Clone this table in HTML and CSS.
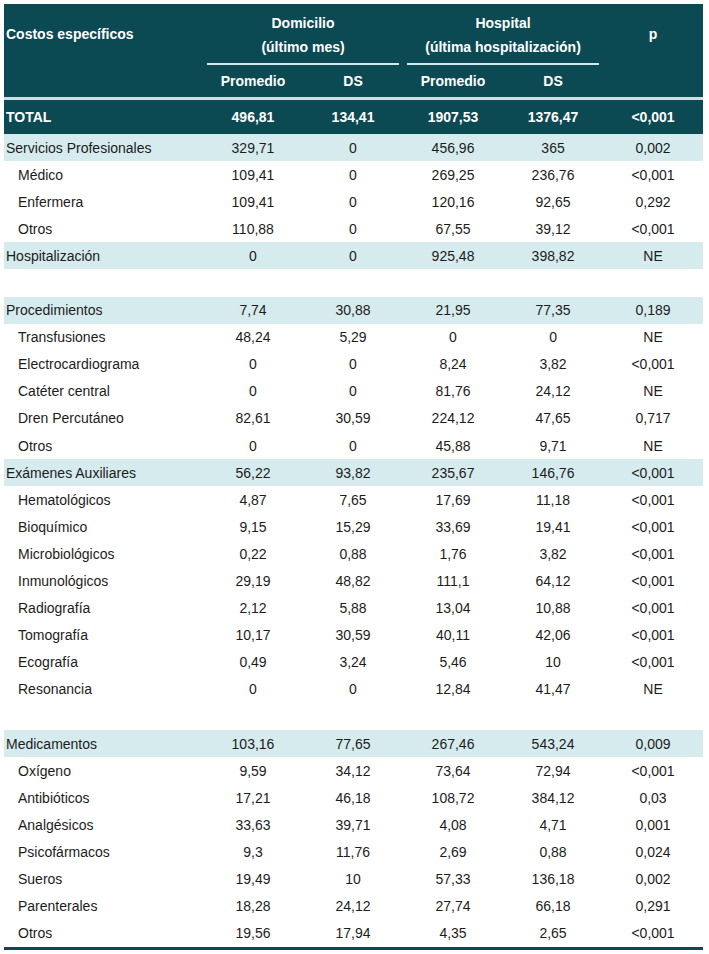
FILE: index.html
```html
<!DOCTYPE html>
<html lang="es">
<head>
<meta charset="utf-8">
<title>Costos específicos</title>
<link rel="stylesheet" href="styles.css">
</head>
<body>
<table class="costs">
  <colgroup>
    <col class="c-label">
    <col class="c-num"><col class="c-num"><col class="c-num"><col class="c-num"><col class="c-num">
  </colgroup>
  <thead>
    <tr class="h1">
      <th class="lbl">Costos específicos</th>
      <th colspan="2" class="grp"><div class="grp-in">Domicilio<br>(último mes)</div></th>
      <th colspan="2" class="grp"><div class="grp-in">Hospital<br>(última hospitalización)</div></th>
      <th>p</th>
    </tr>
    <tr class="h2">
      <th></th>
      <th>Promedio</th><th>DS</th><th>Promedio</th><th>DS</th>
      <th></th>
    </tr>
  </thead>
  <tbody>
    <tr class="total"><td class="lbl">TOTAL</td><td>496,81</td><td>134,41</td><td>1907,53</td><td>1376,47</td><td>&lt;0,001</td></tr>
    <tr class="cat"><td class="lbl">Servicios Profesionales</td><td>329,71</td><td>0</td><td>456,96</td><td>365</td><td>0,002</td></tr>
    <tr><td class="sub">Médico</td><td>109,41</td><td>0</td><td>269,25</td><td>236,76</td><td>&lt;0,001</td></tr>
    <tr><td class="sub">Enfermera</td><td>109,41</td><td>0</td><td>120,16</td><td>92,65</td><td>0,292</td></tr>
    <tr><td class="sub">Otros</td><td>110,88</td><td>0</td><td>67,55</td><td>39,12</td><td>&lt;0,001</td></tr>
    <tr class="cat"><td class="lbl">Hospitalización</td><td>0</td><td>0</td><td>925,48</td><td>398,82</td><td>NE</td></tr>
    <tr class="blank"><td colspan="6"></td></tr>
    <tr class="cat"><td class="lbl">Procedimientos</td><td>7,74</td><td>30,88</td><td>21,95</td><td>77,35</td><td>0,189</td></tr>
    <tr><td class="sub">Transfusiones</td><td>48,24</td><td>5,29</td><td>0</td><td>0</td><td>NE</td></tr>
    <tr><td class="sub">Electrocardiograma</td><td>0</td><td>0</td><td>8,24</td><td>3,82</td><td>&lt;0,001</td></tr>
    <tr><td class="sub">Catéter central</td><td>0</td><td>0</td><td>81,76</td><td>24,12</td><td>NE</td></tr>
    <tr><td class="sub">Dren Percutáneo</td><td>82,61</td><td>30,59</td><td>224,12</td><td>47,65</td><td>0,717</td></tr>
    <tr><td class="sub">Otros</td><td>0</td><td>0</td><td>45,88</td><td>9,71</td><td>NE</td></tr>
    <tr class="cat"><td class="lbl">Exámenes Auxiliares</td><td>56,22</td><td>93,82</td><td>235,67</td><td>146,76</td><td>&lt;0,001</td></tr>
    <tr><td class="sub">Hematológicos</td><td>4,87</td><td>7,65</td><td>17,69</td><td>11,18</td><td>&lt;0,001</td></tr>
    <tr><td class="sub">Bioquímico</td><td>9,15</td><td>15,29</td><td>33,69</td><td>19,41</td><td>&lt;0,001</td></tr>
    <tr><td class="sub">Microbiológicos</td><td>0,22</td><td>0,88</td><td>1,76</td><td>3,82</td><td>&lt;0,001</td></tr>
    <tr><td class="sub">Inmunológicos</td><td>29,19</td><td>48,82</td><td>111,1</td><td>64,12</td><td>&lt;0,001</td></tr>
    <tr><td class="sub">Radiografía</td><td>2,12</td><td>5,88</td><td>13,04</td><td>10,88</td><td>&lt;0,001</td></tr>
    <tr><td class="sub">Tomografía</td><td>10,17</td><td>30,59</td><td>40,11</td><td>42,06</td><td>&lt;0,001</td></tr>
    <tr><td class="sub">Ecografía</td><td>0,49</td><td>3,24</td><td>5,46</td><td>10</td><td>&lt;0,001</td></tr>
    <tr><td class="sub">Resonancia</td><td>0</td><td>0</td><td>12,84</td><td>41,47</td><td>NE</td></tr>
    <tr class="blank"><td colspan="6"></td></tr>
    <tr class="cat"><td class="lbl">Medicamentos</td><td>103,16</td><td>77,65</td><td>267,46</td><td>543,24</td><td>0,009</td></tr>
    <tr><td class="sub">Oxígeno</td><td>9,59</td><td>34,12</td><td>73,64</td><td>72,94</td><td>&lt;0,001</td></tr>
    <tr><td class="sub">Antibióticos</td><td>17,21</td><td>46,18</td><td>108,72</td><td>384,12</td><td>0,03</td></tr>
    <tr><td class="sub">Analgésicos</td><td>33,63</td><td>39,71</td><td>4,08</td><td>4,71</td><td>0,001</td></tr>
    <tr><td class="sub">Psicofármacos</td><td>9,3</td><td>11,76</td><td>2,69</td><td>0,88</td><td>0,024</td></tr>
    <tr><td class="sub">Sueros</td><td>19,49</td><td>10</td><td>57,33</td><td>136,18</td><td>0,002</td></tr>
    <tr><td class="sub">Parenterales</td><td>18,28</td><td>24,12</td><td>27,74</td><td>66,18</td><td>0,291</td></tr>
    <tr class="last"><td class="sub">Otros</td><td>19,56</td><td>17,94</td><td>4,35</td><td>2,65</td><td>&lt;0,001</td></tr>
  </tbody>
</table>
</body>
</html>
```
FILE: styles.css
```css
html, body {
  margin: 0;
  padding: 0;
  background: #ffffff;
}

body {
  font-family: "Liberation Sans", Arial, sans-serif;
  font-size: 14px;
  color: #1c1c1c;
}

.costs {
  margin: 4px 0 0 4px;
  width: 699px;
  border-collapse: collapse;
  table-layout: fixed;
}

.c-label { width: 199px; }
.c-num { width: 100px; }

.costs th {
  background: #0c4a53;
  color: #ffffff;
  font-weight: bold;
  text-align: center;
  padding: 0;
}

.costs th.lbl {
  text-align: left;
  padding-left: 2px;
}

.h1 th {
  height: 59px;
  vertical-align: middle;
  padding-bottom: 2px;
}

.h1 th.grp {
  vertical-align: bottom;
  padding: 0 4px 0 4px;
}

.grp-in {
  line-height: 24px;
  padding-bottom: 4px;
  border-bottom: 2px solid #d5e6e9;
}

.h2 th {
  height: 32px;
  border-bottom: 3px solid #cfe0e4;
}

.costs td {
  height: 27.1px;
  padding: 0;
  text-align: center;
  vertical-align: middle;
}

.costs td.lbl {
  text-align: left;
  padding-left: 2px;
}

.costs td.sub {
  text-align: left;
  padding-left: 14px;
}

.total td {
  background: #0c4a53;
  color: #ffffff;
  font-weight: bold;
  height: 34px;
  padding-top: 0;
}

.cat td {
  background: #d5ebee;
}

.last td {
  border-bottom: 3px solid #0c4a53;
}
```
